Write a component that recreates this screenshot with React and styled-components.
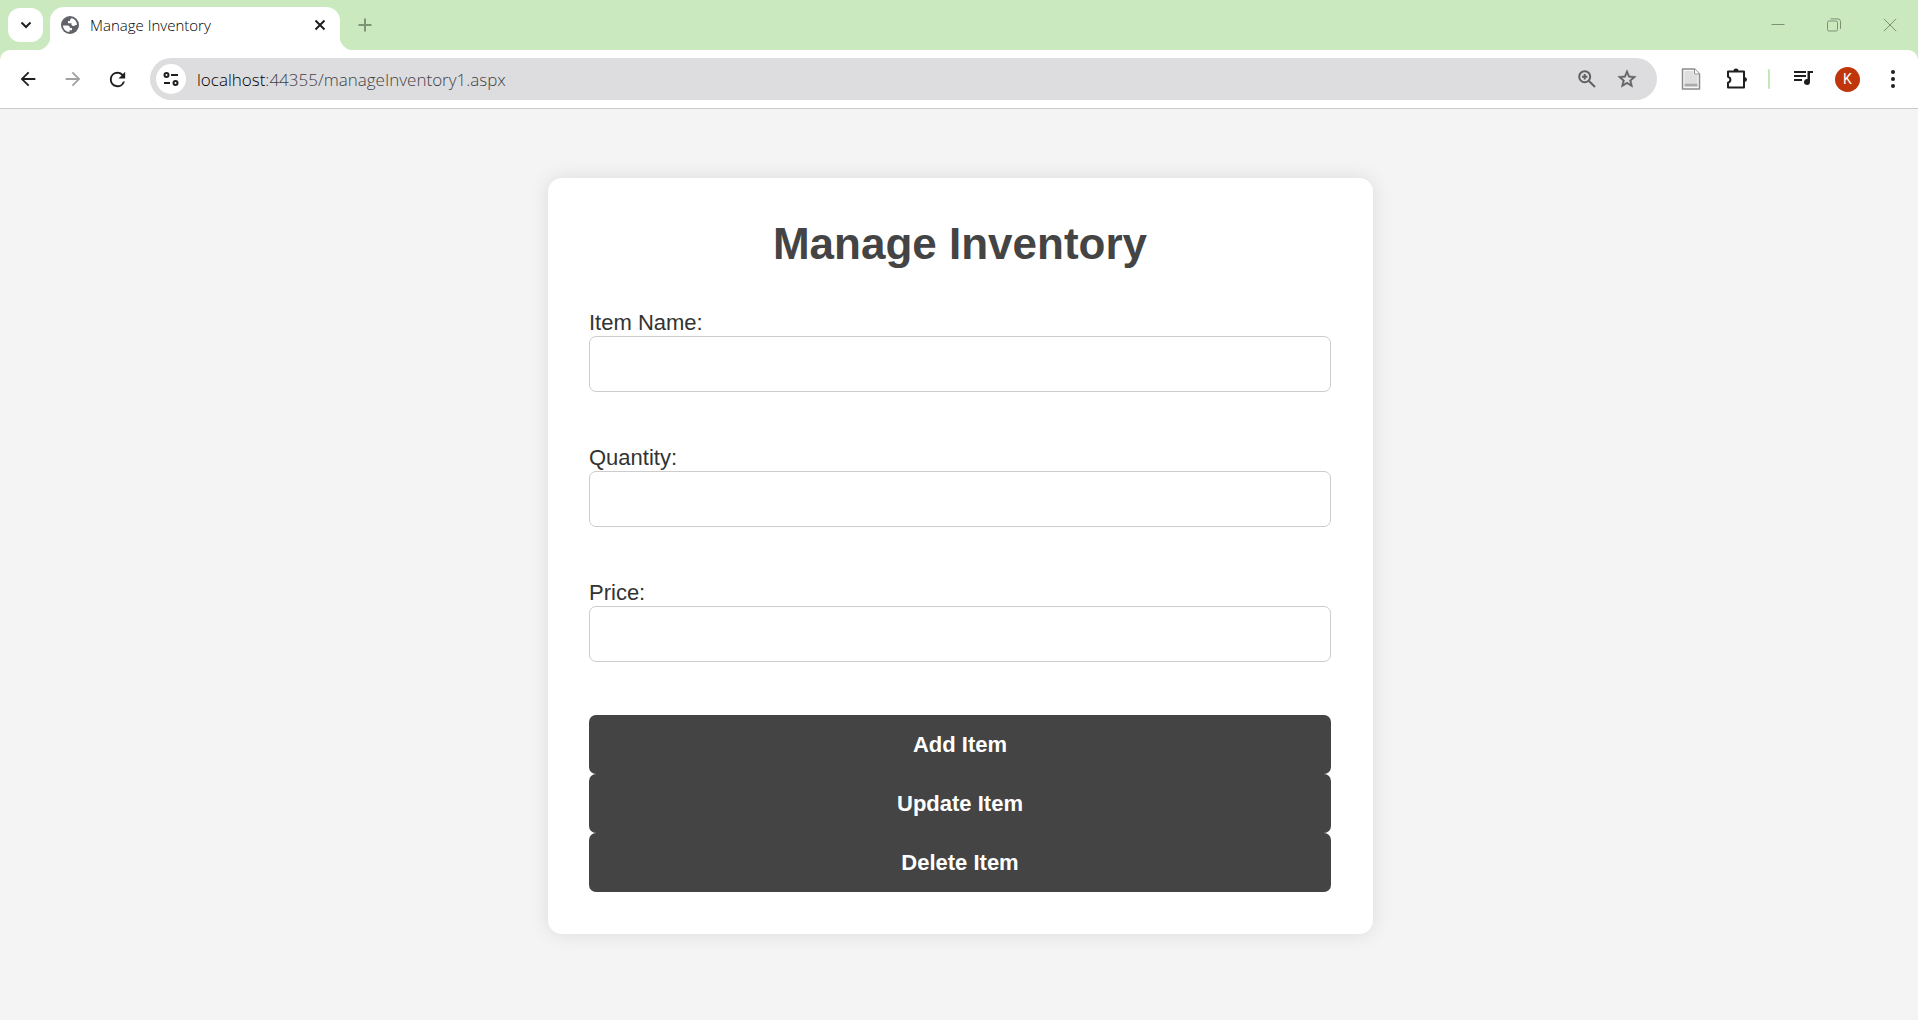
import React from "react";
import styled, { createGlobalStyle } from "styled-components";

const GlobalStyle = createGlobalStyle`
  *, *::before, *::after { box-sizing: border-box; }
  body { margin: 0; background: #f4f4f4; }
  button, input { font: inherit; margin: 0; }
`;

const Browser = styled.div`
  display: flex;
  flex-direction: column;
  min-height: 100vh;
  font-family: "Open Sans", "Noto Sans", sans-serif;
  color: #1f1f1f;
`;

const TabStrip = styled.header`
  display: flex;
  align-items: flex-end;
  height: 50px;
  padding-left: 8px;
  background: #cbe9bf;
`;

const PlainButton = styled.button`
  display: flex;
  align-items: center;
  justify-content: center;
  flex: none;
  padding: 0;
  border: 0;
  background: none;
  color: ${(p) => p.$color || "#1f1f1f"};
`;

const TabSearch = styled(PlainButton)`
  width: 35px;
  height: 34px;
  margin-bottom: 8px;
  border-radius: 12px;
  background: #fff;
`;

const Tab = styled.div`
  position: relative;
  display: flex;
  align-items: center;
  width: 290px;
  height: 43px;
  margin-left: 7px;
  padding: 0 8px 7px 11px;
  border-radius: 14px 14px 0 0;
  background: #fff;

  &::before, &::after {
    content: "";
    position: absolute;
    bottom: 0;
    width: 14px;
    height: 14px;
  }
  &::before {
    right: 100%;
    background: radial-gradient(circle at 0 0, transparent 14px, #fff 15px);
  }
  &::after {
    left: 100%;
    background: radial-gradient(circle at 100% 0, transparent 14px, #fff 15px);
  }
`;

const TabTitle = styled.span`
  flex: 1;
  margin-left: 11px;
  font-size: 15px;
  font-weight: 300;
  line-height: 20px;
  white-space: nowrap;
  color: #000;
`;

const TabClose = styled(PlainButton)`
  width: 24px;
  height: 24px;
`;

const NewTab = styled(PlainButton)`
  width: 50px;
  height: 50px;
`;

const WindowControls = styled.div`
  display: flex;
  margin-left: auto;
`;

const WindowButton = styled(PlainButton)`
  width: 56px;
  height: 50px;
`;

const ToolbarBack = styled.div`
  background: #cbe9bf;
`;

const Toolbar = styled.nav`
  display: flex;
  align-items: center;
  height: 59px;
  padding: 0 3px 0 5px;
  border-bottom: 1px solid #c9cacb;
  border-radius: 10px 10px 0 0;
  background: #fff;
`;

const ToolButton = styled(PlainButton)`
  width: 45px;
  height: 42px;
`;

const AddressBar = styled.div`
  display: flex;
  align-items: center;
  flex: 1;
  height: 42px;
  margin: 0 11px 0 10px;
  padding: 0 10px 0 6px;
  border-radius: 21px;
  background: #dddddf;
`;

const SiteInfo = styled(PlainButton)`
  width: 30px;
  height: 30px;
  border-radius: 50%;
  background: #fff;
`;

const Address = styled.span`
  flex: 1;
  margin-left: 11px;
  padding-top: 2px;
  font-size: 17px;
  font-weight: 300;
  line-height: 24px;
  color: #3f4144;
`;

const Host = styled.span`
  color: #000;
`;

const AddressAction = styled(PlainButton)`
  width: 40px;
  height: 40px;
`;

const Divider = styled.span`
  width: 2px;
  height: 20px;
  margin: 0 10px;
  border-radius: 1px;
  background: #c3e7b6;
`;

const Avatar = styled.span`
  display: flex;
  align-items: center;
  justify-content: center;
  width: 25px;
  height: 25px;
  border-radius: 50%;
  background: #bf360c;
  color: #fff;
  font-family: Roboto, sans-serif;
  font-size: 14px;
`;

const Page = styled.main`
  flex: 1;
  padding: 69px 20px 69px 23px;
  background: #f4f4f4;
  font-family: "Liberation Sans", Arial, sans-serif;
  color: #333;
`;

const Card = styled.form`
  display: flex;
  flex-direction: column;
  max-width: 825px;
  margin: 0 auto;
  padding: 41px 42px 42px 41px;
  border-radius: 14px;
  background: #fff;
  box-shadow: 0 0 20px rgba(0, 0, 0, 0.1);
`;

const Title = styled.h1`
  margin: 0 0 41px;
  font-size: 44px;
  line-height: 50px;
  text-align: center;
  color: #444;
`;

const Field = styled.div`
  display: flex;
  flex-direction: column;
  margin-bottom: 53px;
`;

const Label = styled.label`
  font-size: 22px;
  line-height: 26px;
`;

const TextInput = styled.input`
  width: 100%;
  height: 56px;
  padding: 0 14px;
  border: 1px solid #ccc;
  border-radius: 7px;
  background: #fff;
  font-size: 22px;
  color: #333;
`;

const ActionButton = styled.button`
  width: 100%;
  height: 59px;
  padding: 0;
  border: 0;
  border-radius: 7px;
  background: #444;
  color: #fff;
  font-size: 22px;
  font-weight: bold;
`;

const Icon = ({ size = 24, box = 24, children, line = 2, fill }) => (
  <svg
    width={size}
    height={size}
    viewBox={`0 0 ${box} ${box}`}
    fill={fill ? "currentColor" : "none"}
    stroke={fill ? "none" : "currentColor"}
    strokeWidth={line}
    aria-hidden="true"
  >
    {children}
  </svg>
);

const fields = [
  { id: "item-name", label: "Item Name:" },
  { id: "quantity", label: "Quantity:" },
  { id: "price", label: "Price:" },
];

const actions = ["Add Item", "Update Item", "Delete Item"];

export default function App() {
  return (
    <Browser>
      <GlobalStyle />
      <TabStrip>
        <TabSearch aria-label="Search tabs">
          <Icon size={12} box={12} line={2}><path d="M1.500 3.500 6 8l4.500-4.500" /></Icon>
        </TabSearch>
        <Tab>
          <Icon size={18} box={18} fill>
            <circle cx="9" cy="9" r="9" fill="#5f6368" />
            <path fill="#fff" d="M2 9.500h4.500c1.600 0 2.500 1 2.500 2.500h2v2.200H8.500v1.800C4.800 16 2 13 2 9.500Z" />
            <path fill="#fff" d="M10.500 2.200C13.700 2.800 16 5.600 16 9h-1.500c-.8 1.300-3 1.300-4 0V7.200H7V5h2c0-1.500.5-2.400 1.500-2.800Z" />
          </Icon>
          <TabTitle>Manage Inventory</TabTitle>
          <TabClose aria-label="Close tab">
            <Icon size={12} box={12} line={2}><path d="m1.500 1.500 9 9m0-9-9 9" /></Icon>
          </TabClose>
        </Tab>
        <NewTab aria-label="New tab" $color="#7d9576">
          <Icon size={14} box={14} line={2}><path d="M7 .5v13M.5 7h13" /></Icon>
        </NewTab>
        <WindowControls>
          <WindowButton aria-label="Minimize" $color="#7d9075">
            <Icon size={14} box={14} line={1}><path d="M.5 6.500h13" /></Icon>
          </WindowButton>
          <WindowButton aria-label="Restore" $color="#7d9075">
            <Icon size={14} box={14} line={1}>
              <rect x=".5" y="3" width="10" height="10" rx="1.500" />
              <path d="M3.500.9h7.500a2.500 2.500 0 0 1 2.500 2.500v7.500" />
            </Icon>
          </WindowButton>
          <WindowButton aria-label="Close" $color="#7d9075">
            <Icon size={14} box={14} line={1}><path d="m.8.8 12.400 12.400m0-12.400L.8 13.200" /></Icon>
          </WindowButton>
        </WindowControls>
      </TabStrip>

      <ToolbarBack>
        <Toolbar>
          <ToolButton aria-label="Back">
            <Icon size={22} fill><path d="M20 11H7.830l5.590-5.590L12 4l-8 8 8 8 1.410-1.410L7.830 13H20v-2z" /></Icon>
          </ToolButton>
          <ToolButton aria-label="Forward" $color="#a1a1a1">
            <Icon size={22} fill><path d="m12 4-1.410 1.410L16.170 11H4v2h12.170l-5.580 5.590L12 20l8-8z" /></Icon>
          </ToolButton>
          <ToolButton aria-label="Reload">
            <Icon size={23} fill><path d="M17.650 6.350A7.958 7.958 0 0 0 12 4a8 8 0 1 0 7.730 10h-2.080A6 6 0 1 1 12 6c1.660 0 3.140.69 4.220 1.780L13 11h7V4l-2.350 2.350z" /></Icon>
          </ToolButton>
          <AddressBar>
            <SiteInfo aria-label="View site information">
              <Icon size={16} box={16} line={2}>
                <circle cx="3.500" cy="4" r="2" /><path d="M8 4h7M1 12h6" /><circle cx="12.500" cy="12" r="2" />
              </Icon>
            </SiteInfo>
            <Address><Host>localhost</Host>:44355/manageInventory1.aspx</Address>
            <AddressAction aria-label="Zoom" $color="#5f6164">
              <Icon size={18} box={18} line={2}>
                <circle cx="6.700" cy="6.700" r="5.500" /><path d="m10.700 10.700 6.300 6.300" /><path d="M6.700 4v5.400M4 6.700h5.400" />
              </Icon>
            </AddressAction>
            <AddressAction aria-label="Bookmark this tab" $color="#5f6164">
              <Icon size={22} fill><path stroke="currentColor" strokeWidth=".5" d="m22 9.240-7.190-.62L12 2 9.190 8.630 2 9.240l5.460 4.730L5.820 21 12 17.270 18.180 21l-1.630-7.030L22 9.240zM12 15.400l-3.760 2.270 1-4.280-3.320-2.880 4.380-.38L12 6.100l1.710 4.040 4.380.38-3.320 2.880 1 4.280L12 15.400z" /></Icon>
            </AddressAction>
          </AddressBar>
          <ToolButton aria-label="Document extension">
            <svg width="20" height="22" viewBox="0 0 20 22" aria-hidden="true">
              <path d="M1.500 1h12l5 5v15h-17z" fill="#f7f7f7" stroke="#8c8c8c" strokeWidth="1.500" strokeLinejoin="round" />
              <path d="M3.500 3h9v4h4v8h-13z" fill="#dedede" />
              <path d="M13.500 1v5h5" fill="#fff" stroke="#8c8c8c" />
              <path d="M3.500 15.500h13v3h-13z" fill="#aaa" />
            </svg>
          </ToolButton>
          <ToolButton aria-label="Extensions">
            <Icon size={22} box={22} line={2}>
              <path d="M3 3.500h16v16H3v-4.800c3.200-1.200 3.200-4.800 0-6z" strokeLinejoin="round" />
              <path d="M8.500 3a2.500 2.500 0 0 1 5 0zM19.500 9a2.500 2.500 0 0 1 0 5z" fill="currentColor" stroke="none" />
            </Icon>
          </ToolButton>
          <Divider />
          <ToolButton aria-label="Media controls">
            <Icon size={20} box={20} fill>
              <path d="M1 2h12v2H1zM1 6h12v2H1zM1 10h8v2H1zM14.500 2H20v2h-3v9a3 3 0 1 1-2.500-3z" />
            </Icon>
          </ToolButton>
          <ToolButton aria-label="Profile"><Avatar>K</Avatar></ToolButton>
          <ToolButton aria-label="Browser menu">
            <Icon size={18} box={18} fill>
              <circle cx="9" cy="2" r="2" /><circle cx="9" cy="9" r="2" /><circle cx="9" cy="16" r="2" />
            </Icon>
          </ToolButton>
        </Toolbar>
      </ToolbarBack>

      <Page>
        <Card onSubmit={(e) => e.preventDefault()}>
          <Title>Manage Inventory</Title>
          {fields.map((field) => (
            <Field key={field.id}>
              <Label htmlFor={field.id}>{field.label}</Label>
              <TextInput id={field.id} type="text" />
            </Field>
          ))}
          {actions.map((action) => (
            <ActionButton key={action} type="submit">{action}</ActionButton>
          ))}
        </Card>
      </Page>
    </Browser>
  );
}
